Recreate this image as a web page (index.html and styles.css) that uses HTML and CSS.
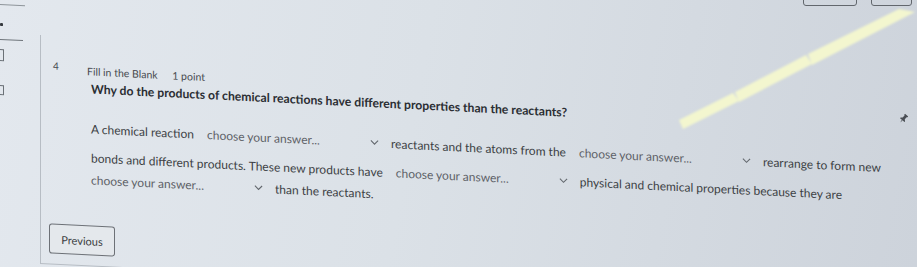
FILE: index.html
```html
<!DOCTYPE html>
<html>
<head>
  <link rel="stylesheet" href="styles.css">
</head>
<body>
  <div class="topbar">
    <span class="winbox"></span>
    <span class="winbox small"></span>
  </div>

  <div class="screen">
    <aside class="rail">
      <div class="rule"></div>
      <div class="mark"></div>
      <div class="rule dark"></div>
      <div class="tick"></div>
      <div class="tick low"></div>
    </aside>

    <main class="card">
      <div class="qrow">
        <div class="qnum">4</div>
        <div class="qbody">
          <div class="qmeta">Fill in the Blank <span class="pts">1 point</span></div>
          <p class="qtext">Why do the products of chemical reactions have different properties than the reactants?</p>

          <div class="answer">
            <div class="line">
              <span>A chemical reaction</span>
              <span class="blank">choose your answer...<svg class="chev" viewBox="0 0 10 6"><path d="M1 1l4 4 4-4"/></svg></span>
              <span>reactants and the atoms from the</span>
              <span class="blank">choose your answer...<svg class="chev" viewBox="0 0 10 6"><path d="M1 1l4 4 4-4"/></svg></span>
              <span>rearrange to form new</span>
            </div>
            <div class="line">
              <span>bonds and different products. These new products have</span>
              <span class="blank">choose your answer...<svg class="chev" viewBox="0 0 10 6"><path d="M1 1l4 4 4-4"/></svg></span>
              <span>physical and chemical properties because they are</span>
            </div>
            <div class="line tight">
              <span class="blank first">choose your answer...<svg class="chev" viewBox="0 0 10 6"><path d="M1 1l4 4 4-4"/></svg></span>
              <span>than the reactants.</span>
            </div>
          </div>
        </div>
        <svg class="pin" viewBox="0 0 16 16">
          <g transform="rotate(40 8 8)">
            <path d="M5 1h6v1.5l-1 .8v4.2l2.2 2v1.3H3.8V9.5L6 7.5V3.3l-1-.8z"/>
            <path d="M7.4 10.8h1.2L8 15.5z"/>
          </g>
        </svg>
      </div>

      <div class="nav">
        <button class="btn">Previous</button>
      </div>
    </main>
  </div>

  <svg class="glare" viewBox="0 0 917 267">
    <defs>
      <filter id="soft"><feGaussianBlur stdDeviation="0.8"/></filter>
    </defs>
    <g filter="url(#soft)">
      <polygon points="679,120 733,93 739,101 683,129"/>
      <polygon points="735,92 806,55 812,64 739,102"/>
      <polygon points="808,54 899,9 915,12 812,65"/>
    </g>
  </svg>
</body>
</html>
```

FILE: styles.css
```css
body {
  margin: 0;
  width: 917px;
  height: 267px;
  overflow: hidden;
  font-family: Lato, "Open Sans", sans-serif;
  color: #3c3f44;
  background: linear-gradient(100deg, #e3e8ee 0%, #dbe1e7 45%, #cdd3db 100%);
}

.topbar {
  height: 7px;
  display: flex;
  justify-content: flex-end;
  gap: 14px;
  padding-right: 5px;
  overflow: hidden;
}
.winbox {
  width: 54px;
  height: 14px;
  margin-top: -8px;
  border: 1.5px solid #62676d;
  border-radius: 3px;
  box-sizing: border-box;
}
.winbox.small {
  width: 41px;
}

.screen {
  display: flex;
  height: 255px;
  transform: skewY(2.8deg);
  transform-origin: 0 0;
}

.rail {
  width: 26px;
  flex-shrink: 0;
}
.rule {
  height: 1px;
  width: 25px;
  margin-top: -3px;
  background: #8e949a;
}
.rule.dark {
  margin-top: 13px;
  width: 23px;
  background: #6f757b;
}
.mark {
  width: 3px;
  height: 3px;
  margin-top: 18px;
  background: #35393e;
  border-radius: 1px;
}
.tick {
  width: 7px;
  height: 12px;
  margin: 9px 0 0 -3px;
  border: 1px solid #6b7177;
  box-sizing: border-box;
}
.tick.low {
  height: 10px;
  margin-top: 24px;
}

.card {
  flex: 1;
  margin: 26px 0 0 14px;
  padding: 24px 6px 8px 12px;
  border-left: 1px solid #b7bdc4;
  border-bottom: 1px solid #b7bdc4;
}

.qrow {
  display: flex;
  align-items: flex-start;
}
.qnum {
  width: 38px;
  flex-shrink: 0;
  font-size: 10px;
  line-height: 13px;
  color: #45484d;
}
.qbody {
  flex: 1;
  white-space: nowrap;
}
.qmeta {
  margin: 4px 0 0 -4px;
  font-size: 10.5px;
  line-height: 13px;
  color: #474a4f;
}
.pts {
  margin-left: 12px;
}
.qtext {
  margin: 3px 0 0;
  font-size: 12.2px;
  line-height: 15px;
  font-weight: 700;
  color: #2b2e33;
}

.answer {
  margin-top: 24px;
  font-size: 12px;
}
.line {
  display: flex;
  align-items: center;
  height: 16px;
}
.line + .line {
  margin-top: 13px;
}
.line.tight {
  margin-top: 6px;
}
.blank {
  display: inline-flex;
  align-items: center;
  justify-content: space-between;
  width: 186px;
  padding: 0 6px 0 8px;
  margin: 0 6px 0 5px;
  box-sizing: border-box;
  color: #5d6167;
}
.blank.first {
  margin-left: -8px;
}
.chev {
  width: 9px;
  height: 6px;
  fill: none;
  stroke: #63686e;
  stroke-width: 1.2;
}

.pin {
  width: 11px;
  height: 11px;
  margin: 12px 2px 0 0;
  fill: #4a4e54;
}

.nav {
  margin: 38px 0 0 -4px;
}
.btn {
  width: 66px;
  height: 30px;
  padding: 0;
  font-family: Lato, "Open Sans", sans-serif;
  font-size: 11px;
  color: #3b3e42;
  background: #e4e8ec;
  border: 1.5px solid #6d7177;
  border-radius: 3px;
}

.glare {
  position: absolute;
  left: 0;
  top: 0;
  width: 917px;
  height: 267px;
  pointer-events: none;
  fill: #f3f6cf;
}
```
